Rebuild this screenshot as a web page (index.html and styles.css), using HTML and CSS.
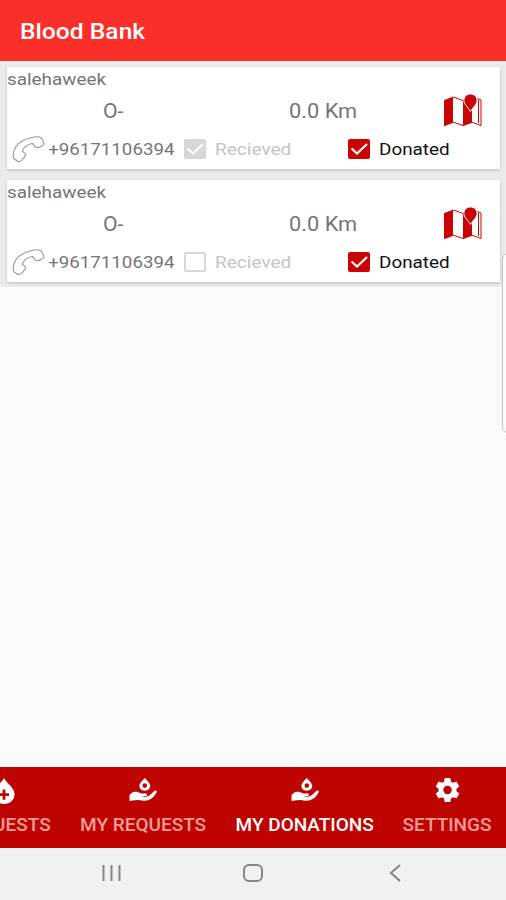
FILE: index.html
```html
<!DOCTYPE html>
<html lang="en">
<head>
<meta charset="utf-8">
<title>Blood Bank</title>
<link rel="stylesheet" href="styles.css">
</head>
<body>
<svg width="0" height="0" class="defs" aria-hidden="true">
  <symbol id="map" viewBox="0 0 40 34">
    <path class="fill" d="M1 6.500 10 3V28.500L1 32z"/>
    <path class="fill" d="M20 6.500 29 3V28.500l-9 3.500z"/>
    <path class="line" d="M1.500 6.500 10.500 3 20 6.500 24 5M34 4.500l4 1.500v25.500l-9-3.300-9 3.300-9.500-3.300-9 3.300M35.500 6v23"/>
    <path class="pin" d="M27.500 0c3.800 0 6.600 2.700 6.600 6.200 0 4.200-3.200 5.800-6.600 11.300-3.400-5.500-6.600-7.100-6.600-11.300 0-3.500 2.800-6.200 6.600-6.200z"/>
  </symbol>
  <symbol id="phone" viewBox="0 0 34 27">
    <path d="M2 23C-1 15 5 5 18 2c7-2 11-1.500 12 1 .8 2 1.800 3.500 2 5 0 1-5 4-7 3.800-1.500 0-3-3-4.500-4.300C15 8 11 12 10.300 15.500c1.500 1 3.700 1.500 3.300 3C13 21 9 25.500 7.500 25.800 6 26 3.500 24 2 23z"/>
  </symbol>
  <symbol id="hand" viewBox="0 0 28 24">
    <path fill-rule="evenodd" d="M15.800 0c2.500 3 5.400 5.200 5.400 8 0 2.700-2.400 4.700-5.400 4.700s-5.400-2-5.400-4.700c0-2.800 2.900-5 5.400-8zm0 5.300a2.300 2.300 0 1 0 0 4.600 2.300 2.300 0 0 0 0-4.600z"/>
    <path d="M.5 17c2.500-3 5-4 8-3l4 1.500h4c2 0 2 2.300 0 2.500l-4.500.2c4 1 7 .3 9-1.300l4-3.700c1.800-1.500 3.500-.2 2.500 1.400-2 4-5.500 7.500-10 8-3 .3-5.500-.5-8-.7l-4 .4-5 .6z"/>
  </symbol>
  <symbol id="drop" viewBox="0 0 22 26">
    <path fill-rule="evenodd" d="M11 0c3 6 10.500 9.500 10.500 16.300C21.500 22 17 26 11 26S.5 22 .5 16.300C.5 9.500 8 6 11 0zM9.600 11.500v3.700H6V18h3.600v3.700h2.800V18H16v-2.800h-3.600v-3.700z"/>
  </symbol>
  <symbol id="gear" viewBox="2 2 20 20">
    <path d="M19.430 12.980c.04-.32.070-.640.070-.980s-.03-.660-.070-.980l2.110-1.650c.19-.15.240-.420.120-.640l-2-3.460c-.12-.22-.390-.300-.610-.220l-2.490 1c-.520-.400-1.080-.730-1.690-.980l-.380-2.650C14.460 2.180 14.250 2 14 2h-4c-.25 0-.460.180-.490.420l-.380 2.650c-.610.250-1.170.590-1.690.980l-2.490-1c-.23-.09-.490 0-.610.220l-2 3.460c-.13.220-.070.490.120.640l2.110 1.650c-.04.320-.070.650-.070.980s.03.660.070.980l-2.110 1.650c-.19.150-.240.420-.120.640l2 3.460c.12.220.390.300.610.220l2.490-1c.520.400 1.080.730 1.690.980l.380 2.650c.03.240.240.420.490.420h4c.25 0 .460-.180.490-.420l.380-2.650c.610-.250 1.170-.590 1.690-.980l2.490 1c.23.090.490 0 .610-.220l2-3.460c.12-.22.070-.490-.120-.640zM12 15.500a3.500 3.500 0 1 1 0-7 3.500 3.500 0 0 1 0 7z"/>
  </symbol>
  <symbol id="tick" viewBox="0 0 22 20"><path d="m3.500 9.500 5.500 5L19 5"/></symbol>
</svg>
<header class="bar"><h1 class="title">Blood Bank</h1></header>
<main class="main">
  <section class="list">
    <article class="card">
      <div class="name"><span class="text">salehaweek</span></div>
      <div class="info">
        <span class="blood">O-</span><span class="distance">0.0 Km</span>
        <svg class="map"><use href="#map"/></svg>
      </div>
      <div class="contact">
        <svg class="phone"><use href="#phone"/></svg>
        <span class="number">+96171106394</span>
        <span class="box gray"><svg class="tick"><use href="#tick"/></svg></span>
        <span class="received">Recieved</span>
        <span class="box red"><svg class="tick"><use href="#tick"/></svg></span>
        <span class="donated">Donated</span>
      </div>
    </article>
    <article class="card">
      <div class="name"><span class="text">salehaweek</span></div>
      <div class="info">
        <span class="blood">O-</span><span class="distance">0.0 Km</span>
        <svg class="map"><use href="#map"/></svg>
      </div>
      <div class="contact">
        <svg class="phone"><use href="#phone"/></svg>
        <span class="number">+96171106394</span>
        <span class="box empty"></span>
        <span class="received">Recieved</span>
        <span class="box red"><svg class="tick"><use href="#tick"/></svg></span>
        <span class="donated">Donated</span>
      </div>
    </article>
  </section>
  <div class="edge-handle"></div>
</main>
<nav class="tabs">
  <div class="tab first"><svg class="drop"><use href="#drop"/></svg><span class="label">REQUESTS</span></div>
  <div class="tab requests"><svg class="hand"><use href="#hand"/></svg><span class="label">MY REQUESTS</span></div>
  <div class="tab donations active"><svg class="hand"><use href="#hand"/></svg><span class="label">MY DONATIONS</span></div>
  <div class="tab settings"><svg class="gear"><use href="#gear"/></svg><span class="label">SETTINGS</span></div>
</nav>
<footer class="system">
  <svg class="key" viewBox="0 0 24 20"><path d="M4.500 2v16M12.500 2v16M20.500 2v16"/></svg>
  <svg class="key" viewBox="0 0 24 20"><rect x="3" y="2" width="18" height="16" rx="5"/></svg>
  <svg class="key" viewBox="0 0 24 20"><path d="m17 2-9 8 9 8"/></svg>
</footer>
</body>
</html>
```
FILE: styles.css
```css
* { box-sizing: border-box; }
body {
  margin: 0;
  height: 900px;
  overflow: hidden;
  display: flex;
  flex-direction: column;
  background: #fafafa;
  font-family: Roboto, "Liberation Sans", sans-serif;
}
.defs { position: absolute; }
svg { display: block; flex: none; }
span, h1 { white-space: nowrap; }

.bar {
  height: 61px;
  flex: none;
  display: flex;
  align-items: center;
  padding: 2px 0 0 20px;
  background: #fb2f2a;
}
.title {
  margin: 0;
  color: #fff;
  font-size: 22px;
  font-weight: 500;
  transform: scaleX(1.12);
  transform-origin: left;
}

.main { flex: 1; position: relative; }
.list {
  display: flex;
  flex-direction: column;
  gap: 11px;
  padding: 6px 6px 5px 7px;
  background: #ebebeb;
}
.card {
  height: 102px;
  background: #fff;
  box-shadow: 0 1px 3px #0003;
  color: #757575;
}
.name { height: 25px; line-height: 25px; font-size: 17px; }
.text { display: inline-block; transform: scaleX(1.11); transform-origin: left; }
.info { height: 37px; display: flex; align-items: center; font-size: 20px; }
.blood { width: 90px; margin-left: 96px; transform: scaleX(1.06); transform-origin: left; }
.distance { width: 150px; margin-left: 96px; transform: scaleX(1.09); transform-origin: left; }
.map { width: 40px; height: 34px; margin-left: 4px; }
.fill { fill: #ca0303; }
.line { fill: none; stroke: #ca0303; stroke-width: 1; }
.pin { fill: #ca0303; stroke: #fff; stroke-width: 1; }

.contact { height: 40px; display: flex; align-items: center; font-size: 17px; }
.phone { width: 34px; height: 27px; margin-left: 5px; fill: none; stroke: #969696; stroke-width: 1.1; }
.number { width: 138px; margin-right: -3px; padding-left: 2px; transform: scaleX(1.1); transform-origin: left; }
.box { width: 22px; height: 20px; margin-left: 3px; border-radius: 2px; flex: none; }
.gray { background: #d7d7d7; }
.red { background: #ca0303; }
.empty { border: 2px solid #d7d7d7; }
.tick { width: 22px; height: 20px; fill: none; stroke: #fff; stroke-width: 2.2; }
.received { width: 130px; margin-left: 9px; color: #c4c4c4; transform: scaleX(1.12); transform-origin: left; }
.donated { margin-left: 9px; color: #111; transform: scaleX(1.11); transform-origin: left; }
.edge-handle {
  position: absolute;
  top: 192px;
  right: -10px;
  width: 14px;
  height: 180px;
  border: 1px solid #c2c2c2;
  border-radius: 6px;
  background: #fafafa;
}

.tabs {
  height: 81px;
  flex: none;
  display: grid;
  grid-template-columns: 65px 156px 167px 118px;
  background: #bd0400;
  overflow: hidden;
}
.tab {
  display: flex;
  flex-direction: column;
  align-items: center;
  padding-top: 11px;
  color: #f79c96;
  font-size: 17.5px;
  font-weight: 500;
}
.tab svg { fill: #fff; height: 24px; }
.tab .label { height: 24px; line-height: 24px; margin-top: 11px; transform: scaleX(1.085); }
.tab.active { color: #fff; }
.first { width: 120px; margin-left: -56px; }
.tab .drop { width: 22px; height: 26px; margin-bottom: -2px; }
.hand { width: 28px; }
.gear { width: 25px; }
.system {
  height: 52px;
  flex: none;
  display: flex;
  justify-content: center;
  align-items: center;
  gap: 118px;
  padding-bottom: 2px;
  background: #f1f1f1;
}
.key { width: 24px; height: 20px; fill: none; stroke: #858585; stroke-width: 2; }
```
